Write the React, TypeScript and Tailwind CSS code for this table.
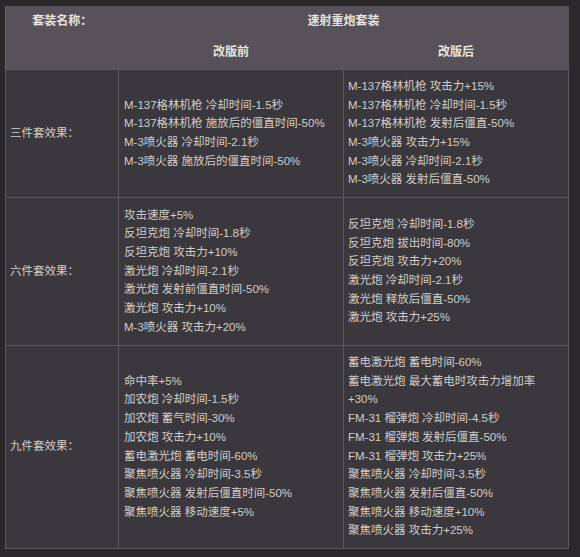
const rows: { label: string; before: string[]; after: string[]; h: string }[] = [
  {
    label: "三件套效果：",
    h: "h-[128px]",
    before: [
      "M-137格林机枪 冷却时间-1.5秒",
      "M-137格林机枪 施放后的僵直时间-50%",
      "M-3喷火器 冷却时间-2.1秒",
      "M-3喷火器 施放后的僵直时间-50%",
    ],
    after: [
      "M-137格林机枪 攻击力+15%",
      "M-137格林机枪 冷却时间-1.5秒",
      "M-137格林机枪 发射后僵直-50%",
      "M-3喷火器 攻击力+15%",
      "M-3喷火器 冷却时间-2.1秒",
      "M-3喷火器 发射后僵直-50%",
    ],
  },
  {
    label: "六件套效果：",
    h: "h-[148px]",
    before: [
      "攻击速度+5%",
      "反坦克炮 冷却时间-1.8秒",
      "反坦克炮 攻击力+10%",
      "激光炮 冷却时间-2.1秒",
      "激光炮 发射前僵直时间-50%",
      "激光炮 攻击力+10%",
      "M-3喷火器 攻击力+20%",
    ],
    after: [
      "反坦克炮 冷却时间-1.8秒",
      "反坦克炮 拔出时间-80%",
      "反坦克炮 攻击力+20%",
      "激光炮 冷却时间-2.1秒",
      "激光炮 释放后僵直-50%",
      "激光炮 攻击力+25%",
    ],
  },
  {
    label: "九件套效果：",
    h: "h-[203px]",
    before: [
      "命中率+5%",
      "加农炮 冷却时间-1.5秒",
      "加农炮 蓄气时间-30%",
      "加农炮 攻击力+10%",
      "蓄电激光炮 蓄电时间-60%",
      "聚焦喷火器 冷却时间-3.5秒",
      "聚焦喷火器 发射后僵直时间-50%",
      "聚焦喷火器 移动速度+5%",
    ],
    after: [
      "蓄电激光炮 蓄电时间-60%",
      "蓄电激光炮 最大蓄电时攻击力增加率",
      "+30%",
      "FM-31 榴弹炮 冷却时间-4.5秒",
      "FM-31 榴弹炮 发射后僵直-50%",
      "FM-31 榴弹炮 攻击力+25%",
      "聚焦喷火器 冷却时间-3.5秒",
      "聚焦喷火器 发射后僵直-50%",
      "聚焦喷火器 移动速度+10%",
      "聚焦喷火器 攻击力+25%",
    ],
  },
];

function Lines({ items }: { items: string[] }) {
  return (
    <div className="flex flex-col">
      {items.map((t, i) => (
        <div key={i} className="whitespace-pre">
          {t}
        </div>
      ))}
    </div>
  );
}

export default function App() {
  return (
    <div className="w-[580px] h-[557px] bg-[#2b282c] pt-[6px] pl-[5px] font-['Liberation_Sans','Noto_Sans_CJK_SC',sans-serif] text-[11.5px] leading-[18.7px] text-[#d2cdc9]">
      <table className="w-[563px] table-fixed border-collapse">
        <colgroup>
          <col className="w-[113px]" />
          <col className="w-[225px]" />
          <col className="w-[225px]" />
        </colgroup>
        <thead className="bg-[#57525a] text-[12px] font-bold text-[#e8e4de]">
          <tr className="h-[31px]">
            <th className="border-l border-[#6a656e] text-center font-bold">套装名称：</th>
            <th colSpan={2} className="text-center font-bold">
              速射重炮套装
            </th>
          </tr>
          <tr className="h-[32px]">
            <th className="border-l border-[#6a656e]"></th>
            <th className="text-center font-bold">改版前</th>
            <th className="text-center font-bold">改版后</th>
          </tr>
        </thead>
        <tbody className="bg-[#3b383d]">
          {rows.map((r) => (
            <tr key={r.label} className={r.h}>
              <td className="border border-[#5c5860] pl-[4px] align-middle">{r.label}</td>
              <td className="border border-[#5c5860] pl-[5px] align-middle">
                <Lines items={r.before} />
              </td>
              <td className="border border-[#5c5860] pl-[4px] align-middle">
                <Lines items={r.after} />
              </td>
            </tr>
          ))}
        </tbody>
      </table>
    </div>
  );
}
